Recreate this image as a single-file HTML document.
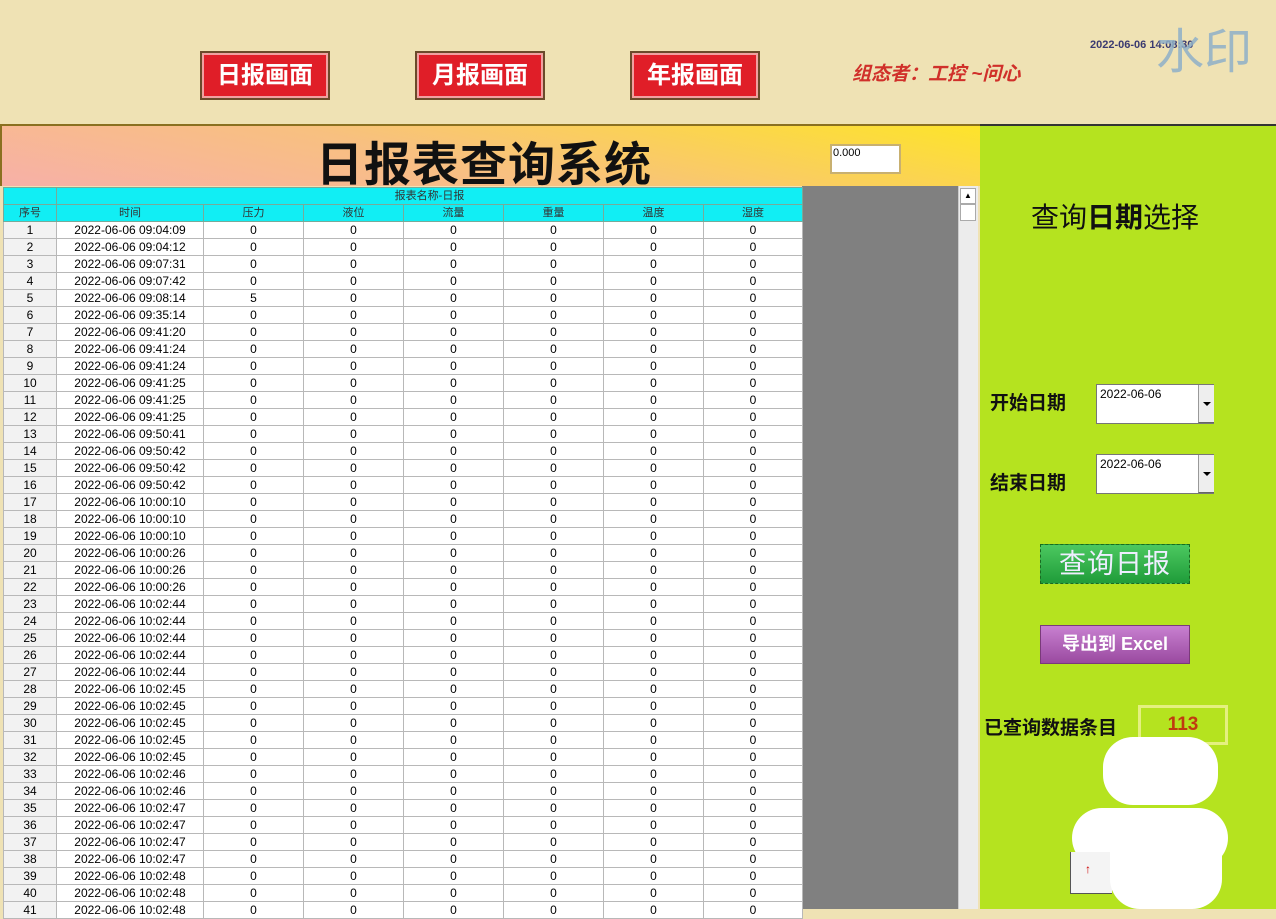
<!DOCTYPE html>
<html><head><meta charset="utf-8"><style>
*{margin:0;padding:0;box-sizing:border-box}
body{width:1276px;height:909px;overflow:hidden;background:#efe2b4;position:relative;font-family:"Liberation Sans","Noto Sans CJK SC",sans-serif}
.abs{position:absolute}
.rb{position:absolute;top:51px;width:130px;height:49px;background:#e01e28;border:2px solid #6b4a2a;box-shadow:inset 0 0 0 2px #f0a0a0;color:#fff;font-weight:bold;font-size:24px;text-align:center;line-height:45px}
#title{left:0;top:124px;width:980px;height:62px;background:linear-gradient(12deg,#f7b0a8 0%,#f8c080 45%,#fde42a 100%);border-top:2px solid #8a7020;border-left:2px solid #8a7020}
#green{left:980px;top:124px;width:296px;height:785px;background:#b5e31f;border-top:2px solid #333}
table{position:absolute;left:3px;top:187px;border-collapse:collapse;table-layout:fixed;font-size:12px;background:#fff}
td{border:1px solid #b8b8b8;height:17px;text-align:center;color:#000;padding:0;line-height:15px;white-space:nowrap;overflow:hidden}
.h td{background:#11eef4;color:#333;border-color:#7a9;font-size:11px}
td:first-child{background:#f2f2f2}
.h td:first-child{background:#11eef4}
.dt{position:absolute;left:1096px;width:118px;height:40px;background:#fff;border:1px solid #777;border-right:none;font-size:12px;padding:2px 3px}
.dt i{position:absolute;right:0;top:0;width:16px;height:38px;background:#eee;border-left:1px solid #999;border-bottom:1px solid #666}
.dt i:after{content:"";position:absolute;left:4px;top:17px;border:4px solid transparent;border-top:4px solid #000}
.lab{position:absolute;font-size:19px;font-weight:bold;color:#111}
</style></head><body>
<div class="rb" style="left:200px">日报画面</div>
<div class="rb" style="left:415px">月报画面</div>
<div class="rb" style="left:630px">年报画面</div>
<div class="abs" style="left:852px;top:59px;color:#d0302a;font-size:19px;font-weight:bold;font-style:italic">组态者：工控 ~问心</div>
<div class="abs" style="left:1090px;top:39px;color:#3a3a70;font-size:11px;font-weight:bold">2022-06-06 14:08:30</div>
<div class="abs" style="left:1156px;top:12px;color:#8fb0c8;font-size:48px;opacity:.85">水印</div>
<div id="title" class="abs"></div>
<div class="abs" style="left:316px;top:126px;font-size:47px;font-weight:bold;color:#111;letter-spacing:1px">日报表查询系统</div>
<div class="abs" style="left:830px;top:144px;width:71px;height:30px;background:#fff;border:2px solid #c8b070;font-size:11px;padding:1px">0.000</div>
<div class="abs" style="left:802px;top:186px;width:156px;height:723px;background:#808080"></div>
<div class="abs" style="left:958px;top:186px;width:20px;height:723px;background:#ececec;border-left:1px solid #ccc"></div>
<div class="abs" style="left:960px;top:188px;width:16px;height:16px;background:#fff;border:1px solid #aaa;font-size:8px;text-align:center;line-height:14px">▲</div>
<div class="abs" style="left:960px;top:204px;width:16px;height:17px;background:#fff;border:1px solid #aaa"></div>
<table>
<colgroup><col style="width:53px"><col style="width:147px"><col style="width:100px"><col style="width:100px"><col style="width:100px"><col style="width:100px"><col style="width:100px"><col style="width:99px"></colgroup>
<tr class="h"><td></td><td colspan="7">报表名称-日报</td></tr>
<tr class="h"><td>序号</td><td>时间</td><td>压力</td><td>液位</td><td>流量</td><td>重量</td><td>温度</td><td>湿度</td></tr>
<tr><td>1</td><td>2022-06-06 09:04:09</td><td>0</td><td>0</td><td>0</td><td>0</td><td>0</td><td>0</td></tr>
<tr><td>2</td><td>2022-06-06 09:04:12</td><td>0</td><td>0</td><td>0</td><td>0</td><td>0</td><td>0</td></tr>
<tr><td>3</td><td>2022-06-06 09:07:31</td><td>0</td><td>0</td><td>0</td><td>0</td><td>0</td><td>0</td></tr>
<tr><td>4</td><td>2022-06-06 09:07:42</td><td>0</td><td>0</td><td>0</td><td>0</td><td>0</td><td>0</td></tr>
<tr><td>5</td><td>2022-06-06 09:08:14</td><td>5</td><td>0</td><td>0</td><td>0</td><td>0</td><td>0</td></tr>
<tr><td>6</td><td>2022-06-06 09:35:14</td><td>0</td><td>0</td><td>0</td><td>0</td><td>0</td><td>0</td></tr>
<tr><td>7</td><td>2022-06-06 09:41:20</td><td>0</td><td>0</td><td>0</td><td>0</td><td>0</td><td>0</td></tr>
<tr><td>8</td><td>2022-06-06 09:41:24</td><td>0</td><td>0</td><td>0</td><td>0</td><td>0</td><td>0</td></tr>
<tr><td>9</td><td>2022-06-06 09:41:24</td><td>0</td><td>0</td><td>0</td><td>0</td><td>0</td><td>0</td></tr>
<tr><td>10</td><td>2022-06-06 09:41:25</td><td>0</td><td>0</td><td>0</td><td>0</td><td>0</td><td>0</td></tr>
<tr><td>11</td><td>2022-06-06 09:41:25</td><td>0</td><td>0</td><td>0</td><td>0</td><td>0</td><td>0</td></tr>
<tr><td>12</td><td>2022-06-06 09:41:25</td><td>0</td><td>0</td><td>0</td><td>0</td><td>0</td><td>0</td></tr>
<tr><td>13</td><td>2022-06-06 09:50:41</td><td>0</td><td>0</td><td>0</td><td>0</td><td>0</td><td>0</td></tr>
<tr><td>14</td><td>2022-06-06 09:50:42</td><td>0</td><td>0</td><td>0</td><td>0</td><td>0</td><td>0</td></tr>
<tr><td>15</td><td>2022-06-06 09:50:42</td><td>0</td><td>0</td><td>0</td><td>0</td><td>0</td><td>0</td></tr>
<tr><td>16</td><td>2022-06-06 09:50:42</td><td>0</td><td>0</td><td>0</td><td>0</td><td>0</td><td>0</td></tr>
<tr><td>17</td><td>2022-06-06 10:00:10</td><td>0</td><td>0</td><td>0</td><td>0</td><td>0</td><td>0</td></tr>
<tr><td>18</td><td>2022-06-06 10:00:10</td><td>0</td><td>0</td><td>0</td><td>0</td><td>0</td><td>0</td></tr>
<tr><td>19</td><td>2022-06-06 10:00:10</td><td>0</td><td>0</td><td>0</td><td>0</td><td>0</td><td>0</td></tr>
<tr><td>20</td><td>2022-06-06 10:00:26</td><td>0</td><td>0</td><td>0</td><td>0</td><td>0</td><td>0</td></tr>
<tr><td>21</td><td>2022-06-06 10:00:26</td><td>0</td><td>0</td><td>0</td><td>0</td><td>0</td><td>0</td></tr>
<tr><td>22</td><td>2022-06-06 10:00:26</td><td>0</td><td>0</td><td>0</td><td>0</td><td>0</td><td>0</td></tr>
<tr><td>23</td><td>2022-06-06 10:02:44</td><td>0</td><td>0</td><td>0</td><td>0</td><td>0</td><td>0</td></tr>
<tr><td>24</td><td>2022-06-06 10:02:44</td><td>0</td><td>0</td><td>0</td><td>0</td><td>0</td><td>0</td></tr>
<tr><td>25</td><td>2022-06-06 10:02:44</td><td>0</td><td>0</td><td>0</td><td>0</td><td>0</td><td>0</td></tr>
<tr><td>26</td><td>2022-06-06 10:02:44</td><td>0</td><td>0</td><td>0</td><td>0</td><td>0</td><td>0</td></tr>
<tr><td>27</td><td>2022-06-06 10:02:44</td><td>0</td><td>0</td><td>0</td><td>0</td><td>0</td><td>0</td></tr>
<tr><td>28</td><td>2022-06-06 10:02:45</td><td>0</td><td>0</td><td>0</td><td>0</td><td>0</td><td>0</td></tr>
<tr><td>29</td><td>2022-06-06 10:02:45</td><td>0</td><td>0</td><td>0</td><td>0</td><td>0</td><td>0</td></tr>
<tr><td>30</td><td>2022-06-06 10:02:45</td><td>0</td><td>0</td><td>0</td><td>0</td><td>0</td><td>0</td></tr>
<tr><td>31</td><td>2022-06-06 10:02:45</td><td>0</td><td>0</td><td>0</td><td>0</td><td>0</td><td>0</td></tr>
<tr><td>32</td><td>2022-06-06 10:02:45</td><td>0</td><td>0</td><td>0</td><td>0</td><td>0</td><td>0</td></tr>
<tr><td>33</td><td>2022-06-06 10:02:46</td><td>0</td><td>0</td><td>0</td><td>0</td><td>0</td><td>0</td></tr>
<tr><td>34</td><td>2022-06-06 10:02:46</td><td>0</td><td>0</td><td>0</td><td>0</td><td>0</td><td>0</td></tr>
<tr><td>35</td><td>2022-06-06 10:02:47</td><td>0</td><td>0</td><td>0</td><td>0</td><td>0</td><td>0</td></tr>
<tr><td>36</td><td>2022-06-06 10:02:47</td><td>0</td><td>0</td><td>0</td><td>0</td><td>0</td><td>0</td></tr>
<tr><td>37</td><td>2022-06-06 10:02:47</td><td>0</td><td>0</td><td>0</td><td>0</td><td>0</td><td>0</td></tr>
<tr><td>38</td><td>2022-06-06 10:02:47</td><td>0</td><td>0</td><td>0</td><td>0</td><td>0</td><td>0</td></tr>
<tr><td>39</td><td>2022-06-06 10:02:48</td><td>0</td><td>0</td><td>0</td><td>0</td><td>0</td><td>0</td></tr>
<tr><td>40</td><td>2022-06-06 10:02:48</td><td>0</td><td>0</td><td>0</td><td>0</td><td>0</td><td>0</td></tr>
<tr><td>41</td><td>2022-06-06 10:02:48</td><td>0</td><td>0</td><td>0</td><td>0</td><td>0</td><td>0</td></tr>
</table>
<div id="green" class="abs"></div>
<div class="abs" style="left:1031px;top:196px;font-size:28px;color:#111">查询<b>日期</b>选择</div>
<div class="lab" style="left:990px;top:388px">开始日期</div>
<div class="lab" style="left:990px;top:468px">结束日期</div>
<div class="dt" style="top:384px">2022-06-06<i></i></div>
<div class="dt" style="top:454px">2022-06-06<i></i></div>
<div class="abs" style="left:1040px;top:544px;width:150px;height:40px;background:linear-gradient(#4cc860,#1f9c3a);border:1px dashed #1a6a20;color:#eef;font-size:27px;text-align:center;line-height:38px;letter-spacing:1px">查询日报</div>
<div class="abs" style="left:1040px;top:625px;width:150px;height:39px;background:linear-gradient(#c880d0,#9a4aa0);border:1px solid #7a3a7a;color:#fff;font-size:18px;font-weight:bold;text-align:center;line-height:37px">导出到 Excel</div>
<div class="lab" style="left:984px;top:713px">已查询数据条目</div>
<div class="abs" style="left:1138px;top:705px;width:90px;height:40px;border:3px solid #e4f080;color:#c03a10;font-size:19px;font-weight:bold;text-align:center;line-height:34px">113</div>
<div class="abs" style="left:1103px;top:737px;width:115px;height:68px;background:#fff;border-radius:30px"></div>
<div class="abs" style="left:1072px;top:808px;width:156px;height:60px;background:#fff;border-radius:30px"></div>
<div class="abs" style="left:1070px;top:852px;width:42px;height:42px;background:#f4f4f4;border-left:1px solid #555;border-bottom:1px solid #555;color:#c00;font-size:12px;font-weight:bold;padding:10px 0 0 14px">↑</div>
<div class="abs" style="left:1110px;top:850px;width:112px;height:59px;background:#fff;border-radius:0 0 30px 30px"></div>
</body></html>
